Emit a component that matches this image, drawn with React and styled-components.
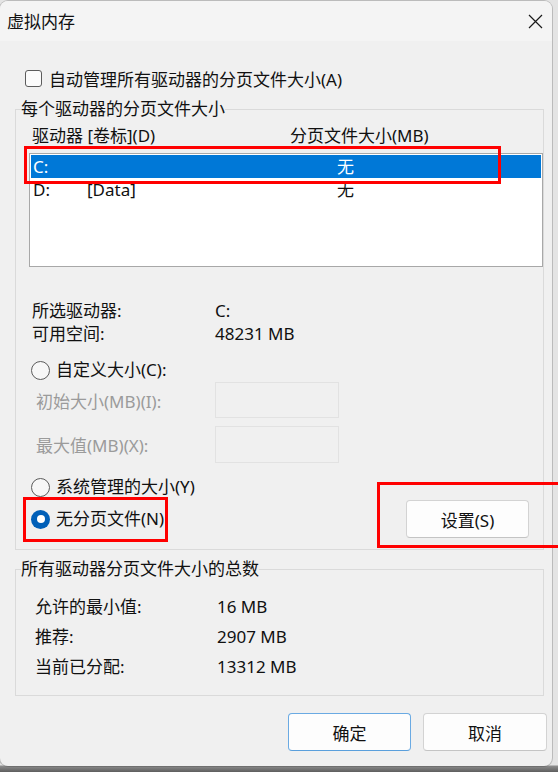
import React from 'react';
import styled, { createGlobalStyle } from 'styled-components';

const GlobalStyle = createGlobalStyle`
  html, body {
    margin: 0;
    padding: 0;
  }
  body {
    width: 558px;
    height: 772px;
    overflow: hidden;
    background: linear-gradient(#e4e4e4 0, #e4e4e4 765px, #8c8c8c 766px, #5e5e5e 772px);
    font-family: "Noto Sans", "Noto Sans CJK SC", sans-serif;
    font-size: 17px;
    color: #111;
  }
`

const Screen = styled.div`
  position: relative;
  width: 558px;
  height: 772px;
  padding-top: 1px;
  box-sizing: border-box;
`

const Window = styled.div`
  width: 552px;
  height: 765px;
  background: #f0f0f0;
  border-radius: 8px;
  overflow: hidden;
  display: flex;
  flex-direction: column;
  box-shadow: 0 0 0 1px rgba(0, 0, 0, 0.18);
`

const TitleBar = styled.div`
  height: 40px;
  flex: none;
  background: #f4f4f4;
  display: flex;
  align-items: center;
  justify-content: space-between;
  padding-left: 7px;
`

const Title = styled.span`
  line-height: 22px;
  padding-top: 1px;
`

const CloseButton = styled.div`
  width: 32px;
  height: 40px;
  display: flex;
  align-items: center;
  justify-content: center;
  margin-right: 1px;
`

const Body = styled.div`
  flex: 1;
  display: flex;
  flex-direction: column;
  padding: 0 8px 0 15px;
`

const CheckRow = styled.label`
  display: flex;
  align-items: center;
  gap: 7px;
  height: 22px;
  margin: 26px 0 0 10px;
`

const CheckBox = styled.span`
  width: 17px;
  height: 17px;
  box-sizing: border-box;
  border: 1px solid #5c5c5c;
  border-radius: 3px;
  background: #fbfbfb;
`

const Group = styled.fieldset`
  margin: ${p => p.$top}px 0 0 0;
  min-width: 0;
  border: 1px solid #dadada;
  padding: ${p => p.$pad};
`

const Legend = styled.legend`
  padding: 0;
  margin-left: ${p => p.$shift}px;
  line-height: 22px;
`

const HeaderRow = styled.div`
  display: grid;
  grid-template-columns: 258px 1fr;
  height: 22px;
  line-height: 22px;
  padding-left: 3px;
`

const DriveList = styled.div`
  margin-top: 6px;
  height: 114px;
  box-sizing: border-box;
  border: 1px solid #a8a8a8;
  padding: 1px;
  background: #fff;
`

const DriveRow = styled.div`
  display: grid;
  grid-template-columns: 54px 250px 1fr;
  height: 23px;
  line-height: 23px;
  padding-left: 2px;
  background: ${p => (p.$selected ? '#0078d7' : 'transparent')};
  color: ${p => (p.$selected ? '#fff' : '#111')};
`

const InfoBlock = styled.div`
  margin-top: ${p => p.$top}px;
  padding-left: ${p => p.$indent}px;
`

const InfoRow = styled.div`
  display: grid;
  grid-template-columns: ${p => p.$labelWidth}px 1fr;
  height: ${p => p.$h}px;
  line-height: ${p => p.$h}px;
`

const RadioRow = styled.label`
  display: flex;
  align-items: center;
  gap: 6px;
  height: 22px;
  line-height: 22px;
  margin-top: ${p => p.$top}px;
  padding-left: 2px;
`

const Radio = styled.span`
  width: 19px;
  height: 19px;
  box-sizing: border-box;
  border-radius: 50%;
  flex: none;
  display: flex;
  align-items: center;
  justify-content: center;
  border: ${p => (p.$checked ? 'none' : '1px solid #5c5c5c')};
  background: ${p => (p.$checked ? '#005fb8' : '#f7f7f7')};
  &::after {
    content: '';
    display: ${p => (p.$checked ? 'block' : 'none')};
    width: 8px;
    height: 8px;
    border-radius: 50%;
    background: #fff;
  }
`

const SizeRow = styled.div`
  display: grid;
  grid-template-columns: 179px 124px;
  align-items: center;
  margin-top: ${p => p.$top}px;
  padding-left: 7px;
  color: #9b9b9b;
`

const SizeInput = styled.div`
  height: ${p => p.$h}px;
  box-sizing: border-box;
  border: 1px solid #e2e2e2;
  background: #f0f0f0;
`

const SetRow = styled.div`
  display: flex;
  align-items: center;
  justify-content: space-between;
  margin-top: 2px;
  padding-right: 14px;
`

const Button = styled.div`
  width: ${p => p.$w}px;
  height: 38px;
  box-sizing: border-box;
  display: flex;
  align-items: center;
  justify-content: center;
  background: #fdfdfd;
  border: 1px solid ${p => (p.$primary ? '#6aaae3' : '#d3d3d3')};
  border-bottom-color: ${p => (p.$primary ? '#5a9fdc' : '#c4c4c4')};
  border-radius: 4px;
  color: #111;
`

const Footer = styled.div`
  display: flex;
  justify-content: flex-end;
  gap: 12px;
  margin: 17px -3px 0 0;
`

const Mark = styled.div`
  position: absolute;
  box-sizing: border-box;
  border: 3px solid #f00;
  pointer-events: none;
`

export default function App() {
  return (
    <>
      <GlobalStyle />
      <Screen>
        <Window>
          <TitleBar>
            <Title>虚拟内存</Title>
            <CloseButton>
              <svg width="15" height="15" viewBox="0 0 15 15">
                <path d="M1 1 L14 14 M14 1 L1 14" stroke="#1a1a1a" strokeWidth="1.2" fill="none" />
              </svg>
            </CloseButton>
          </TitleBar>
          <Body>
            <CheckRow>
              <CheckBox />
              自动管理所有驱动器的分页文件大小(A)
            </CheckRow>

            <Group $top={9} $pad="5px 0 11px 13px">
              <Legend $shift={-8}>每个驱动器的分页文件大小</Legend>
              <HeaderRow>
                <span>驱动器 [卷标](D)</span>
                <span>分页文件大小(MB)</span>
              </HeaderRow>
              <DriveList>
                <DriveRow $selected>
                  <span>C:</span>
                  <span></span>
                  <span>无</span>
                </DriveRow>
                <DriveRow>
                  <span>D:</span>
                  <span>[Data]</span>
                  <span>无</span>
                </DriveRow>
              </DriveList>

              <InfoBlock $top={32} $indent={3}>
                <InfoRow $labelWidth={183} $h={23}>
                  <span>所选驱动器:</span>
                  <span>C:</span>
                </InfoRow>
                <InfoRow $labelWidth={183} $h={23}>
                  <span>可用空间:</span>
                  <span>48231 MB</span>
                </InfoRow>
              </InfoBlock>

              <RadioRow $top={14}>
                <Radio />
                自定义大小(C):
              </RadioRow>
              <SizeRow $top={1}>
                <span>初始大小(MB)(I):</span>
                <SizeInput $h={36} />
              </SizeRow>
              <SizeRow $top={8}>
                <span>最大值(MB)(X):</span>
                <SizeInput $h={37} />
              </SizeRow>
              <RadioRow $top={13}>
                <Radio />
                系统管理的大小(Y)
              </RadioRow>
              <SetRow>
                <RadioRow $top={0}>
                  <Radio $checked />
                  无分页文件(N)
                </RadioRow>
                <Button $w={123}>设置(S)</Button>
              </SetRow>
            </Group>

            <Group $top={8} $pad="12px 0 13px 19px">
              <Legend $shift={-14}>所有驱动器分页文件大小的总数</Legend>
              <InfoRow $labelWidth={182} $h={30}>
                <span>允许的最小值:</span>
                <span>16 MB</span>
              </InfoRow>
              <InfoRow $labelWidth={182} $h={30}>
                <span>推荐:</span>
                <span>2907 MB</span>
              </InfoRow>
              <InfoRow $labelWidth={182} $h={30}>
                <span>当前已分配:</span>
                <span>13312 MB</span>
              </InfoRow>
            </Group>

            <Footer>
              <Button $w={123} $primary>确定</Button>
              <Button $w={124}>取消</Button>
            </Footer>
          </Body>
        </Window>

        <Mark style={{ left: 24, top: 146, width: 477, height: 38 }} />
        <Mark style={{ left: 23, top: 497, width: 145, height: 45 }} />
        <Mark style={{ left: 377, top: 482, width: 190, height: 66 }} />
      </Screen>
    </>
  );
}
